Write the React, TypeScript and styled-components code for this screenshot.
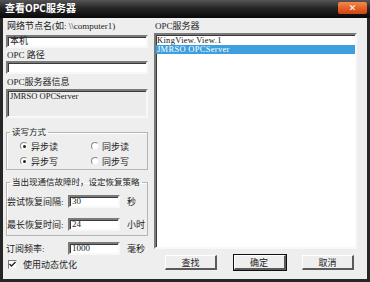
import React from 'react'
import styled, { createGlobalStyle } from 'styled-components'

const GlobalStyle = createGlobalStyle`
  html, body {
    margin: 0;
    padding: 0;
    width: 370px;
    height: 282px;
    overflow: hidden;
    background: #ffffff;
  }
  * {
    box-sizing: border-box;
  }
`

const font = `'Liberation Serif', 'Noto Sans CJK SC', serif`

const Window = styled.div`
  width: 370px;
  height: 282px;
  display: flex;
  flex-direction: column;
  background: #262626;
  font-family: ${font};
  font-size: 9px;
  color: #222222;
`

const TitleBar = styled.div`
  height: 18px;
  flex: none;
  display: flex;
  align-items: center;
  justify-content: space-between;
  padding: 0 3px 2px 5px;
  background: linear-gradient(#555555 0%, #262626 45%, #080808 100%);
`

const Title = styled.div`
  color: #ffffff;
  font-family: 'Noto Sans CJK SC', sans-serif;
  font-weight: bold;
  font-size: 10px;
  line-height: 12px;
`

const CloseButton = styled.div`
  width: 29px;
  height: 12px;
  display: flex;
  align-items: center;
  justify-content: center;
  border-radius: 2px;
  background: linear-gradient(#f58a4a, #e25a22 60%, #c84818);
  color: #ffffff;
  font-family: 'DejaVu Sans', sans-serif;
  font-weight: bold;
  font-size: 9px;
`

const Body = styled.div`
  flex: 1;
  display: flex;
  gap: 6px;
  margin: 0 3px 3px 3px;
  padding: 0 10px 0 3px;
  background: #eeeeee;
`

const LeftColumn = styled.div`
  width: 142px;
  display: flex;
  flex-direction: column;
`

const RightColumn = styled.div`
  width: 203px;
  display: flex;
  flex-direction: column;
`

const Label = styled.div<{ $top: number }>`
  height: 10px;
  line-height: 10px;
  margin-top: ${(p) => p.$top}px;
  padding-left: 1px;
  white-space: nowrap;
`

const sunken = `
  border-style: solid;
  border-width: 2px;
  border-color: #7a7a7a #f8f8f8 #f8f8f8 #7a7a7a;
  box-shadow: inset 1px 1px 0 #3a3a3a;
`

const TextInput = styled.div<{ $top?: number; $width?: number }>`
  ${sunken}
  flex: none;
  height: 13px;
  width: ${(p) => (p.$width ? `${p.$width}px` : '100%')};
  margin-top: ${(p) => p.$top ?? 0}px;
  background: #ffffff;
  padding: 0 2px;
  line-height: 9px;
  font-size: 9px;
  white-space: nowrap;
`

const InfoBox = styled.div`
  ${sunken}
  height: 29px;
  margin-top: 2px;
  background: #ececec;
  padding: 1px 2px;
  line-height: 9px;
  font-size: 8.5px;
`

const Group = styled.fieldset<{ $top: number }>`
  margin: ${(p) => p.$top}px 0 0 0;
  padding: 0;
  border: 1px solid #b4b4b4;
  box-shadow: 1px 1px 0 #ffffff inset;
  min-width: 0;
`

const Legend = styled.legend`
  margin-left: 3px;
  padding: 0 2px;
  height: 10px;
  line-height: 10px;
  font-size: 8.5px;
  white-space: nowrap;
`

const RadioGrid = styled.div`
  display: grid;
  grid-template-columns: 71px 60px;
  row-gap: 3px;
  padding: 3px 0 2px 13px;
`

const RadioItem = styled.div`
  display: flex;
  align-items: center;
  gap: 3px;
  height: 12px;
  font-size: 9px;
`

const RadioDot = styled.span<{ $checked: boolean }>`
  width: 8px;
  height: 8px;
  border-radius: 50%;
  border: 1px solid #8a8a8a;
  border-right-color: #f0f0f0;
  border-bottom-color: #f0f0f0;
  background: #ffffff;
  display: flex;
  align-items: center;
  justify-content: center;
  &::after {
    content: '';
    width: 3px;
    height: 3px;
    border-radius: 50%;
    background: ${(p) => (p.$checked ? '#222222' : 'transparent')};
  }
`

const FieldStack = styled.div`
  display: flex;
  flex-direction: column;
  gap: 10px;
  padding: 8px 0 4px 0;
`

const FieldRow = styled.div<{ $top?: number }>`
  display: flex;
  align-items: center;
  height: 13px;
  margin-top: ${(p) => p.$top ?? 0}px;
  font-size: 9px;
  white-space: nowrap;
`

const FieldLabel = styled.span<{ $width: number }>`
  flex: none;
  width: ${(p) => p.$width}px;
  white-space: nowrap;
`

const Unit = styled.span`
  margin-left: 7px;
  white-space: nowrap;
`

const CheckRow = styled.div`
  display: flex;
  align-items: center;
  gap: 6px;
  margin-top: 3px;
  padding-left: 2px;
  height: 12px;
  font-size: 9px;
`

const CheckBox = styled.span`
  width: 9px;
  height: 9px;
  border: 1px solid #7a7a7a;
  border-right-color: #f0f0f0;
  border-bottom-color: #f0f0f0;
  background: #ffffff;
  display: flex;
  align-items: center;
  justify-content: center;
`

const ListBox = styled.div`
  ${sunken}
  height: 216px;
  margin-top: 2px;
  background: #ffffff;
  padding-top: 1px;
`

const ListItem = styled.div<{ $selected?: boolean }>`
  height: 9px;
  line-height: 9px;
  padding-left: 1px;
  font-size: 8.5px;
  letter-spacing: 0.3px;
  white-space: nowrap;
  color: ${(p) => (p.$selected ? '#ffffff' : '#111111')};
  background: ${(p) => (p.$selected ? '#3d9fe0' : 'transparent')};
`

const ButtonRow = styled.div`
  display: flex;
  justify-content: space-between;
  margin-top: 6px;
  padding: 0 3px 0 11px;
`

const Button = styled.div<{ $default?: boolean }>`
  width: 52px;
  height: 15px;
  display: flex;
  align-items: center;
  justify-content: center;
  font-size: 9px;
  background: #eeeeee;
  border-style: solid;
  border-width: 1px 2px 2px 1px;
  border-color: #ffffff #5a5a5a #5a5a5a #ffffff;
  box-shadow: ${(p) => (p.$default ? '0 0 0 1px #111111' : 'none')};
`

const App: React.FC = () => {
  return (
    <>
      <GlobalStyle />
      <Window>
        <TitleBar>
          <Title>查看OPC服务器</Title>
          <CloseButton>✕</CloseButton>
        </TitleBar>
        <Body>
          <LeftColumn>
            <Label $top={3}>网络节点名(如: \\computer1)</Label>
            <TextInput $top={4}>本机</TextInput>
            <Label $top={2}>OPC 路径</Label>
            <TextInput $top={1} />
            <Label $top={3}>OPC服务器信息</Label>
            <InfoBox>JMRSO OPCServer</InfoBox>
            <Group $top={9}>
              <Legend>读写方式</Legend>
              <RadioGrid>
                <RadioItem>
                  <RadioDot $checked />
                  异步读
                </RadioItem>
                <RadioItem>
                  <RadioDot $checked={false} />
                  同步读
                </RadioItem>
                <RadioItem>
                  <RadioDot $checked />
                  异步写
                </RadioItem>
                <RadioItem>
                  <RadioDot $checked={false} />
                  同步写
                </RadioItem>
              </RadioGrid>
            </Group>
            <Group $top={7}>
              <Legend>当出现通信故障时，设定恢复策略</Legend>
              <FieldStack>
                <FieldRow>
                  <FieldLabel $width={61}>尝试恢复间隔:</FieldLabel>
                  <TextInput $width={52}>30</TextInput>
                  <Unit>秒</Unit>
                </FieldRow>
                <FieldRow>
                  <FieldLabel $width={61}>最长恢复时间:</FieldLabel>
                  <TextInput $width={52}>24</TextInput>
                  <Unit>小时</Unit>
                </FieldRow>
              </FieldStack>
            </Group>
            <FieldRow $top={6}>
              <FieldLabel $width={62}>订阅频率:</FieldLabel>
              <TextInput $width={52}>1000</TextInput>
              <Unit>毫秒</Unit>
            </FieldRow>
            <CheckRow>
              <CheckBox>
                <svg width="7" height="7" viewBox="0 0 7 7">
                  <path d="M0.5 3 L2.5 5 L6.5 1" stroke="#222" strokeWidth="1.4" fill="none" />
                </svg>
              </CheckBox>
              使用动态优化
            </CheckRow>
          </LeftColumn>
          <RightColumn>
            <Label $top={3}>OPC服务器</Label>
            <ListBox>
              <ListItem>KingView.View.1</ListItem>
              <ListItem $selected>JMRSO OPCServer</ListItem>
            </ListBox>
            <ButtonRow>
              <Button>查找</Button>
              <Button $default>确定</Button>
              <Button>取消</Button>
            </ButtonRow>
          </RightColumn>
        </Body>
      </Window>
    </>
  )
}

export default App
